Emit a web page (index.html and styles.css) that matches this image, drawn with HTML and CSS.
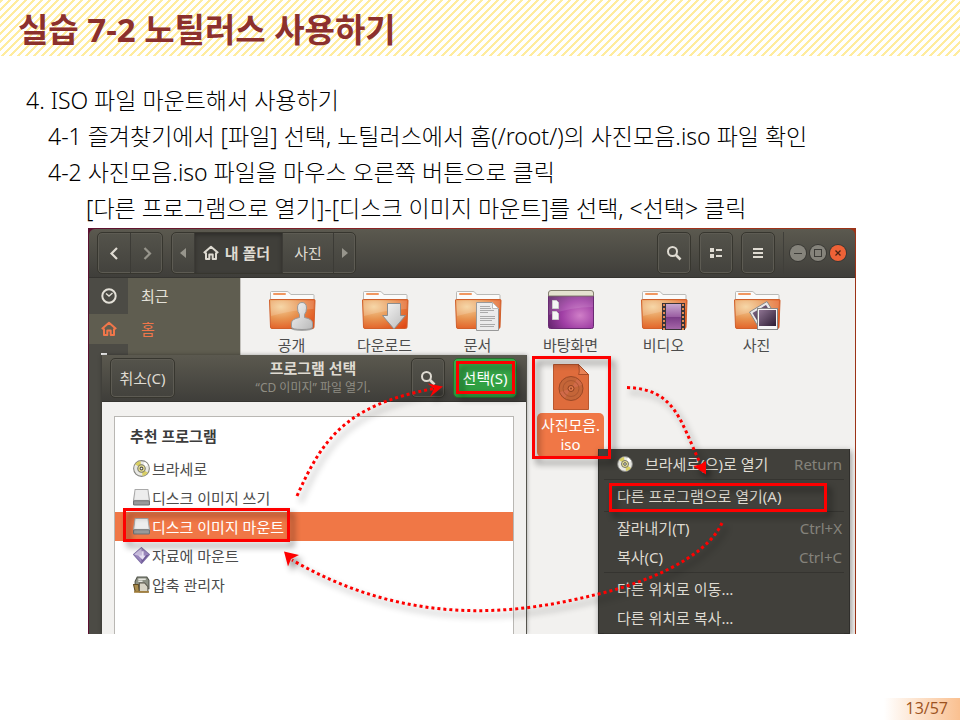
FILE: index.html
```html
<!DOCTYPE html>
<html lang="ko">
<head>
<meta charset="utf-8">
<title>실습 7-2 노틸러스 사용하기</title>
<link rel="stylesheet" href="styles.css">
</head>
<body>
<svg class="defs" aria-hidden="true">
  <defs>
    <radialGradient id="folderFill" cx="0.25" cy="0.25" r="0.95">
      <stop offset="0" stop-color="#f4cf97"/><stop offset="0.45" stop-color="#e7924f"/><stop offset="1" stop-color="#e14a16"/>
    </radialGradient>
    <linearGradient id="silver" x1="0" y1="0" x2="1" y2="1">
      <stop offset="0" stop-color="#f7f7f7"/><stop offset="1" stop-color="#b9b9b9"/>
    </linearGradient>
    <radialGradient id="desk" cx="0.7" cy="0.65" r="0.8">
      <stop offset="0" stop-color="#d07fc8"/><stop offset="0.5" stop-color="#a03fa5"/><stop offset="1" stop-color="#5f2369"/>
    </radialGradient>
    <linearGradient id="film" x1="0" y1="0" x2="0" y2="1">
      <stop offset="0" stop-color="#c9a9d0"/><stop offset="0.5" stop-color="#9b5fa3"/><stop offset="0.52" stop-color="#7a3b86"/><stop offset="1" stop-color="#a566a8"/>
    </linearGradient>
    <linearGradient id="photo" x1="0" y1="0" x2="1" y2="1">
      <stop offset="0" stop-color="#8d7391"/><stop offset="1" stop-color="#2c1c33"/>
    </linearGradient>
    <symbol id="folder" viewBox="0 0 48 42">
      <path d="M2.500 14V2.500Q2.500 1.500 3.500 1.500H19Q20 1.500 20.500 2.200L23 4.500H45Q46 4.500 46 5.500V14Z" fill="#fbfbfa" stroke="#b9b9b6"/>
      <rect x="5" y="3" width="13" height="2" rx="1" fill="#f0965f"/>
      <path d="M1.500 10Q1.500 9.500 2.500 9.500H46Q47 9.500 47 10.500L46 37Q46 38.500 44.500 38.500H4Q2.500 38.500 2.500 37Z" fill="url(#folderFill)" stroke="#d0602c"/>
      <path d="M2.500 10.500H46L45.500 19Q24 20 3 26Z" fill="#fff" opacity=".16"/>
    </symbol>
    <symbol id="search" viewBox="0 0 16 16">
      <circle cx="6.500" cy="6.500" r="4.500" fill="none" stroke="currentColor" stroke-width="2"/>
      <path d="M10 10L14.500 14.500" stroke="currentColor" stroke-width="2.600"/>
    </symbol>
    <symbol id="home" viewBox="0 0 16 16">
      <path d="M.8 8L8 1.800L15.200 8M3 7.500V14H6.300V9.500H9.700V14H13V7.500" fill="none" stroke="currentColor" stroke-width="2" stroke-linejoin="round"/>
    </symbol>
    <symbol id="disc" viewBox="0 0 16 16">
      <circle cx="8" cy="8" r="7.400" fill="#e9e9e4" stroke="#858580"/>
      <path d="M8 8L2 4A7 7 0 0 1 7 1ZM8 8L14 12A7 7 0 0 1 9 15Z" fill="#d9cf62"/>
      <path d="M8 8L11 1.600A7 7 0 0 1 14 5Z" fill="#fff"/>
      <circle cx="8" cy="8" r="3.500" fill="#e6de91" stroke="#77776d"/>
      <circle cx="8" cy="8" r="1.300" fill="#fff" stroke="#55554c"/>
    </symbol>
    <symbol id="drive" viewBox="0 0 16 16">
      <path d="M2 .5H14L15.500 10.500V14.500H.5V10.500Z" fill="#d8d8d8" stroke="#a9a9a9"/>
      <path d="M2.500 1H13.500L14.500 10H1.500Z" fill="#ededed"/>
      <rect x=".5" y="11" width="15" height="4" rx="1" fill="#98999a" stroke="#6f7072"/>
    </symbol>
  </defs>
</svg>

<header class="slide-head"><h1>실습 7-2 노틸러스 사용하기</h1></header>

<main>
  <div class="steps">
    <p>4. ISO 파일 마운트해서 사용하기</p>
    <p class="sub">4-1 즐겨찾기에서 [파일] 선택, 노틸러스에서 홈(/root/)의 사진모음.iso 파일 확인</p>
    <p class="sub">4-2 사진모음.iso 파일을 마우스 오른쪽 버튼으로 클릭</p>
    <p class="subsub">[다른 프로그램으로 열기]-[디스크 이미지 마운트]를 선택, &lt;선택&gt; 클릭</p>
  </div>

  <section class="desktop">
    <div class="window">
      <div class="titlebar">
        <div class="group nav">
          <button type="button" aria-label="뒤로"><svg width="16" height="16" viewBox="0 0 16 16"><path d="M11 3L5.500 8.500L11 14" fill="none" stroke="currentColor" stroke-width="2.200"/></svg></button>
          <button type="button" class="dim" aria-label="앞으로"><svg width="16" height="16" viewBox="0 0 16 16"><path d="M5.500 3L11 8.500L5.500 14" fill="none" stroke="currentColor" stroke-width="2.200"/></svg></button>
        </div>
        <div class="group path">
          <button type="button" class="dim small" aria-label="이전 경로"><svg width="6" height="10" viewBox="0 0 6 10"><path d="M6 0V10L0 5Z" fill="currentColor"/></svg></button>
          <button type="button" class="here"><svg width="16" height="16"><use href="#home"/></svg>내 폴더</button>
          <button type="button" class="crumb">사진</button>
          <button type="button" class="dim small" aria-label="다음 경로"><svg width="6" height="10" viewBox="0 0 6 10"><path d="M0 0V10L6 5Z" fill="currentColor"/></svg></button>
        </div>
        <div class="tools">
          <button type="button" class="tool" aria-label="검색"><svg width="16" height="16"><use href="#search"/></svg></button>
          <button type="button" class="tool" aria-label="보기"><svg width="14" height="12" viewBox="0 0 14 12"><path d="M1 1H5V5H1ZM1 7H5V11H1ZM7 2H13V4H7ZM7 8H13V10H7Z" fill="currentColor"/></svg></button>
          <button type="button" class="tool" aria-label="메뉴"><svg width="12" height="12" viewBox="0 0 12 12"><path d="M1 1H11V3H1ZM1 5H11V7H1ZM1 9H11V11H1Z" fill="currentColor"/></svg></button>
        </div>
        <div class="wm">
          <button type="button" aria-label="최소화"><svg width="16" height="16" viewBox="0 0 16 16"><path d="M4 8.500H12" stroke="#3d3c38"/></svg></button>
          <button type="button" aria-label="최대화"><svg width="16" height="16" viewBox="0 0 16 16"><rect x="4.500" y="4.500" width="7" height="7" fill="none" stroke="#3d3c38"/></svg></button>
          <button type="button" class="close" aria-label="닫기"><svg width="16" height="16" viewBox="0 0 16 16"><path d="M5.500 5.500L10.500 10.500M10.500 5.500L5.500 10.500" stroke="#4a2414" stroke-width="1.300"/></svg></button>
        </div>
      </div>
      <div class="panes">
        <nav class="places">
          <a href="#recent"><span class="ico"><svg width="18" height="18" viewBox="0 0 18 18"><circle cx="9" cy="9" r="6.700" fill="none" stroke="currentColor" stroke-width="2"/><path d="M6 6.500L9 9L12.500 6" fill="none" stroke="currentColor" stroke-width="1.400"/></svg></span><span class="name">최근</span></a>
          <a href="#home-folder" class="on"><span class="ico"><svg width="16" height="16"><use href="#home"/></svg></span><span class="name">홈</span></a>
          <div class="rest"><span class="ico"><svg width="16" height="5" viewBox="0 0 16 5"><path d="M0 3H6V5H0Z" fill="#eee"/></svg></span><span class="name"></span></div>
        </nav>
        <div class="files">
          <div class="file"><svg width="48" height="42" viewBox="0 0 48 42"><use href="#folder" width="48" height="42"/><ellipse cx="34" cy="38.500" rx="11" ry="2.500" fill="#777" opacity=".6"/><path d="M29.500 18Q29.500 12.500 34 12.500T38.500 18Q38.500 22 36.500 24.500V27.500Q44.500 29 44.500 33V37Q44.500 39.500 34 39.500T23.500 37V33Q23.500 29 31.500 27.500V24.500Q29.500 22 29.500 18Z" fill="url(#silver)" stroke="#999"/></svg><span>공개</span></div>
          <div class="file"><svg width="48" height="42" viewBox="0 0 48 42"><use href="#folder" width="48" height="42"/><path d="M26.500 13.500H39.500V25.500H44.500L33 39L21.500 25.500H26.500Z" fill="url(#silver)" stroke="#8d8d8d"/></svg><span>다운로드</span></div>
          <div class="file"><svg width="48" height="42" viewBox="0 0 48 42"><use href="#folder" width="48" height="42"/><path d="M22.500 12.500H38.500L44.500 18.500V40.500H22.500Z" fill="#ebebeb" stroke="#999"/><path d="M38.500 12.500V18.500H44.500Z" fill="#fff" stroke="#bbb"/><path d="M26 16.500H36M26 18.500H37M26 20.500H40M26 22.500H34M26 26.500H41M26 28.500H41M26 30.500H38M26 34.500H41M26 36.500H40" stroke="#aaa"/></svg><span>문서</span></div>
          <div class="file"><svg width="48" height="42" viewBox="0 0 48 42"><rect x="1.500" y="1.500" width="45" height="37" rx="2" fill="url(#desk)" stroke="#6a2a73"/><path d="M1.500 6V3Q1.500 .5 4 .5H44Q46.500 .5 46.500 3V6Z" fill="#e4e2d0" stroke="#858270"/><path d="M2 7H46V17Q24 17 2 25Z" fill="#fff" opacity=".12"/><path d="M5.500 10.500H9.500L11.500 12.500V18.500H5.500ZM5.500 21.500H9.500L11.500 23.500V29.500H5.500Z" fill="#f5f5f5" stroke="#ccc"/></svg><span>바탕화면</span></div>
          <div class="file"><svg width="48" height="42" viewBox="0 0 48 42"><use href="#folder" width="48" height="42"/><rect x="22" y="13" width="23" height="27" fill="#3a3438"/><rect x="26" y="14" width="15" height="25" fill="url(#film)"/><path d="M24 14V40M43 14V40" stroke="#e38a55" stroke-width="2" stroke-dasharray="2 2"/></svg><span>비디오</span></div>
          <div class="file"><svg width="48" height="42" viewBox="0 0 48 42"><use href="#folder" width="48" height="42"/><path d="M16.500 22L34 11.500L44.500 28.500L26 38Z" fill="#e9e9e9" stroke="#888"/><path d="M19.500 23L33 15L38 23L25 32Z" fill="url(#photo)"/><rect x="24.500" y="18.500" width="20" height="21" fill="#f6f6f6" stroke="#888"/><rect x="26" y="20" width="17" height="16" fill="url(#photo)"/></svg><span>사진</span></div>
          <div class="file iso"><svg width="36" height="46" viewBox="0 0 36 46"><path d="M.5 .5H25.500L35.500 10.500V45.500H.5Z" fill="#df6c3c" stroke="#b9572e"/><path d="M25.500 .5Q27 8 25.500 10.500H35.500Z" fill="#e98356" stroke="#a94c27"/><circle cx="18" cy="24.500" r="12" fill="#c46538" stroke="#9b4826"/><path d="M18 24.500L7 28A11 11 0 0 0 12 34ZM18 24.500L29 21A11 11 0 0 0 24 15Z" fill="#d06a4a"/><circle cx="18" cy="24.500" r="8" fill="none" stroke="#ab5530"/><circle cx="18" cy="24.500" r="3" fill="#e07a4c" stroke="#8c3f20"/><circle cx="18" cy="24.500" r="1" fill="#8c3f20"/></svg><span>사진모음.<br>iso</span></div>
        </div>
      </div>
    </div>

    <div class="dialog" role="dialog" aria-labelledby="dlg-title">
      <div class="dialog-head">
        <button type="button" class="tool cancel">취소(C)</button>
        <div class="dialog-title"><strong id="dlg-title">프로그램 선택</strong><small>“CD 이미지” 파일 열기.</small></div>
        <button type="button" class="tool find" aria-label="검색"><svg width="16" height="16"><use href="#search"/></svg></button>
        <button type="button" class="choose">선택(S)</button>
      </div>
      <div class="dialog-body">
        <div class="apps">
          <h2>추천 프로그램</h2>
          <ul>
            <li><svg width="17" height="17"><use href="#disc"/></svg>브라세로</li>
            <li><svg width="17" height="17"><use href="#drive"/></svg>디스크 이미지 쓰기</li>
            <li class="picked"><svg width="17" height="17"><use href="#drive"/></svg>디스크 이미지 마운트</li>
            <li><svg width="17" height="17" viewBox="0 0 16 16"><path d="M8 .5L15.500 7L8 15.500L.5 7Z" fill="#9a86bd" stroke="#8272a8"/><path d="M8 1L8 9L1 7Z" fill="#c9bddd"/><path d="M8 15L8 9L15 7Z" fill="#6d5896"/><path d="M8 4V8H5L9 12L12 8H10V4Z" fill="#e6dff2"/></svg>자료에 마운트</li>
            <li><svg width="17" height="17" viewBox="0 0 16 16"><path d="M4 1H13L15 4V12H2V5Z" fill="#8d9184" stroke="#4f5248"/><path d="M5 3H12M5 5H9" stroke="#e6e6df" stroke-width="1.400"/><path d="M.5 8H5L6 14.500H2Z" fill="#a98b4c" stroke="#5f4b22"/><path d="M6 6.500H11L14 10V15H6Z" fill="#d8d4c5" stroke="#5c594e"/><path d="M1 15H15" stroke="#a37f3c" stroke-width="1.600"/></svg>압축 관리자</li>
          </ul>
        </div>
      </div>
    </div>

    <ul class="menu" role="menu">
      <li role="menuitem"><svg width="16" height="16"><use href="#disc"/></svg>브라세로(으)로 열기<kbd>Return</kbd></li>
      <li role="separator" class="sep"></li>
      <li role="menuitem">다른 프로그램으로 열기(A)</li>
      <li role="separator" class="sep"></li>
      <li role="menuitem">잘라내기(T)<kbd>Ctrl+X</kbd></li>
      <li role="menuitem">복사(C)<kbd>Ctrl+C</kbd></li>
      <li role="separator" class="sep"></li>
      <li role="menuitem">다른 위치로 이동…</li>
      <li role="menuitem">다른 위치로 복사…</li>
      <li role="separator" class="sep"></li>
    </ul>

    <svg class="marks" width="768" height="406" viewBox="88 228 768 406" aria-hidden="true">
      <g fill="none" stroke="#fe0000" stroke-width="3">
        <rect x="457.500" y="362.500" width="56" height="30"/>
        <rect x="533.500" y="357.500" width="76" height="100"/>
        <rect x="610.500" y="484.500" width="215" height="26"/>
        <rect x="124.500" y="509.500" width="164" height="31"/>
      </g>
      <g fill="none" stroke="#fe0000" stroke-width="3" stroke-dasharray="3 3">
        <path d="M297 496C322 440 345 405 434 388.500"/>
        <path d="M627 387.500C675 389 680 420 700 463"/>
        <path d="M722 523C705 560 640 585 590 596C500 618 400 622 292 560"/>
      </g>
      <g fill="#fe0000">
        <path d="M427.500 383.500L443 386.500L430 397L434 388.500Z"/>
        <path d="M693 466L706 474.500L706 461L700 464.500Z"/>
        <path d="M284 551.500L299 555L291 559L288 566.500Z"/>
      </g>
    </svg>
  </section>
</main>

<footer><span>13/57</span></footer>
</body>
</html>
```
FILE: styles.css
```css
* { box-sizing: border-box; }

body {
  margin: 0;
  min-height: 100vh;
  display: flex;
  flex-direction: column;
  background: #fff;
  color: #000;
  font-family: "Open Sans", "Noto Sans CJK KR", sans-serif;
}

.defs { position: absolute; width: 0; height: 0; }

.slide-head {
  height: 56px;
  padding: 0 18px;
  background: linear-gradient(135deg, #ffec9e 0 22%, #fff 22% 50%, #ffec9e 50% 72%, #fff 72%) 0 0 / 8px 8px;
}
h1 {
  margin: 0;
  font-size: 33px;
  line-height: 60px;
  font-weight: 700;
  color: #8c302d;
}

.steps { padding: 26px 26px 2px; }
.steps p {
  margin: 0;
  font-family: "Noto Sans", "Noto Sans CJK KR", sans-serif;
  font-size: 23px;
  font-weight: 300;
  line-height: 36px;
}
.steps .sub { padding-left: 22px; }
.steps .subsub { padding-left: 60px; }

/* desktop with the file manager */
.desktop {
  position: relative;
  margin: 0 104px 0 88px;
  height: 406px;
  overflow: hidden;
  padding: 1px 1px 0;
  background: linear-gradient(90deg, #5b1030, #a8301e 60%, #9c3317);
  font-family: "Noto Sans", "Noto Sans CJK KR", sans-serif;
  font-size: 15px;
  line-height: 20px;
  color: #4c4c4c;
}
.desktop button {
  margin: 0;
  padding: 0;
  border: 0;
  background: none;
  font: inherit;
  color: #dfdbd2;
  display: flex;
  align-items: center;
  justify-content: center;
}
.desktop ul { list-style: none; margin: 0; padding: 0; }

.window { height: 100%; display: flex; flex-direction: column; }
.titlebar {
  height: 49px;
  display: flex;
  align-items: center;
  gap: 8px;
  padding: 0 9px 1px 8px;
  border-radius: 6px 6px 0 0;
  border-bottom: 1px solid #353430;
  background: linear-gradient(#5b594f, #3f3e3a);
}
.group, .desktop .tool {
  border: 1px solid #37362f;
  border-radius: 5px;
  box-shadow: inset 0 0 0 1px #5d5b53;
  background: linear-gradient(#54534b, #43423d);
}
.group { display: flex; height: 42px; }
.nav button { width: 32px; }
.nav button + button, .path button + button { border-left: 1px solid #3c3b36; }
.path .small { width: 22px; }
.desktop .here { width: 88px; gap: 6px; padding-right: 4px; font-weight: 700; background: #403f3a; box-shadow: inset 0 2px 4px #2d2c29; }
.path .crumb { width: 51px; }
.desktop .dim { color: #97958c; }
.tools { display: flex; gap: 8px; margin-left: auto; padding-right: 8px; border-right: 1px solid #403f3a; }
.tools .tool { width: 34px; height: 42px; }
.wm { display: flex; gap: 4px; margin-left: -2px; }
.desktop .wm button { width: 16px; height: 16px; border-radius: 50%; background: #85837b; box-shadow: 0 0 0 1px #3a3935; }
.desktop .wm .close { background: #ee6237; }

.panes { flex: 1; display: flex; min-height: 0; background: #f2f1ef; }
.places { width: 152px; display: flex; flex-direction: column; border-right: 1px solid #c4c2bd; }
.places a, .rest { display: flex; color: #e4e1d8; text-decoration: none; }
.places a { height: 36px; }
.places .on { height: 30px; color: #f0764a; }
.ico { width: 39px; display: flex; align-items: center; justify-content: center; background: #4c4b45; }
.on .ico { background: #5f5d50; }
.name { flex: 1; display: flex; align-items: center; padding-left: 13px; background: #5f5d50; }
.rest { flex: 1; }
.rest .ico { align-items: flex-start; padding-top: 6px; }

.files {
  flex: 1;
  display: grid;
  grid-template-columns: repeat(6, 93px);
  grid-template-rows: 74px auto;
  align-items: start;
  padding: 12px 0 0 4px;
}
.file { display: flex; flex-direction: column; align-items: center; gap: 3px; text-align: center; }
.iso { grid-column: 4; }
.iso span { padding: 3px 4px; border-radius: 5px; background: #f07746; color: #fff; line-height: 19px; }

/* application chooser */
.dialog {
  position: absolute;
  left: 14px;
  top: 127px;
  bottom: 0;
  width: 425px;
  display: flex;
  flex-direction: column;
  border-right: 1px solid #55544d;
  box-shadow: 0 0 4px rgba(0, 0, 0, .35);
}
.dialog-head {
  height: 47px;
  display: flex;
  align-items: center;
  padding: 0 9px 1px 8px;
  border-bottom: 1px solid #353430;
  background: linear-gradient(#5b594f, #3f3e3a);
}
.dialog-head .tool, .dialog-head .choose { height: 40px; }
.cancel { width: 65px; }
.find { width: 34px; }
.dialog-title { flex: 1; padding-left: 40px; text-align: center; color: #dfdbd2; }
.dialog-title strong, .dialog-title small { display: block; }
.dialog-title small { font-size: 12px; color: #8f8d84; }
.dialog-head .choose { width: 64px; margin-left: 8px; border: 1px solid #26702f; border-radius: 5px; background: linear-gradient(#3aae4b, #2c9a3f); color: #fff; }
.dialog-body { flex: 1; display: flex; padding: 14px 12px 0; background: #f2f1ef; }
.apps { flex: 1; border: 1px solid #b9b7b3; border-bottom: 0; background: #fff; }
.apps h2 { margin: 9px 0 8px 15px; font-size: 15px; line-height: 20px; color: #3c3c3c; }
.apps li { height: 29px; display: flex; align-items: center; gap: 2px; padding-left: 18px; }
.apps .picked { background: #f07746; color: #fff; }

/* context menu */
.menu {
  position: absolute;
  left: 510px;
  top: 221px;
  bottom: 0;
  width: 252px;
  border: 1px solid #2f2e2b;
  border-top: 0;
  background: #41403b;
  color: #dfdbd2;
  box-shadow: 1px 2px 6px rgba(0, 0, 0, .4);
}
.desktop .menu { padding: 0 5px; }
.menu li { height: 29px; display: flex; align-items: center; padding: 0 2px 0 13px; }
.menu li svg { margin-right: 12px; }
.menu .sep { height: 1px; margin: 1px 0; padding: 0; background: #353430; }
.menu kbd { margin-left: auto; font: inherit; color: #85837b; }

.marks { position: absolute; left: 0; top: 0; filter: drop-shadow(4px 5px 3px rgba(0, 0, 0, .45)); }

footer {
  margin-top: auto;
  align-self: flex-end;
  width: 76px;
  padding-right: 12px;
  background: linear-gradient(90deg, #fff, #fac090);
  color: #9c5220;
  font-size: 16px;
  line-height: 20px;
  padding-bottom: 2px;
  text-align: right;
}
```
